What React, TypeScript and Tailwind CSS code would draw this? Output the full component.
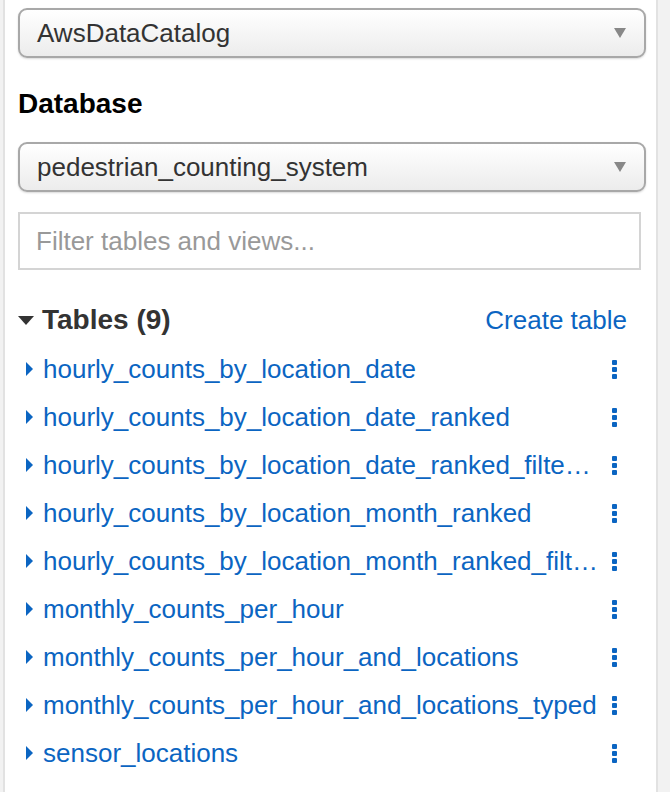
import React from "react";

const tables = [
  "hourly_counts_by_location_date",
  "hourly_counts_by_location_date_ranked",
  "hourly_counts_by_location_date_ranked_filtered",
  "hourly_counts_by_location_month_ranked",
  "hourly_counts_by_location_month_ranked_filtered",
  "monthly_counts_per_hour",
  "monthly_counts_per_hour_and_locations",
  "monthly_counts_per_hour_and_locations_typed",
  "sensor_locations",
];

function Select({ value }: { value: string }) {
  return (
    <div className="flex h-[50px] items-center justify-between rounded-[9px] border-2 border-[#a8a8a8] bg-gradient-to-b from-[#ffffff] to-[#ececec] pl-[17px] pr-[18px] shadow-[0_1px_2px_rgba(0,0,0,0.15)]">
      <span className="text-[26px] leading-none text-[#333]">{value}</span>
      <svg width="12" height="10" viewBox="0 0 12 10">
        <path d="M0 0 L12 0 L6 10 Z" fill="#888" />
      </svg>
    </div>
  );
}

function Dots() {
  return (
    <div className="flex flex-col items-center gap-[2px]">
      <span className="h-[5px] w-[5px] rounded-[1px] bg-[#0b65c2]" />
      <span className="h-[5px] w-[5px] rounded-[1px] bg-[#0b65c2]" />
      <span className="h-[5px] w-[5px] rounded-[1px] bg-[#0b65c2]" />
    </div>
  );
}

export default function App() {
  return (
    <div
      className="flex h-[792px] w-[670px] bg-[#f2f2f2]"
      style={{ fontFamily: '"Liberation Sans", Arial, sans-serif' }}
    >
      <div className="ml-[3px] h-full w-[655px] border-x-2 border-[#e2e2e2] bg-white pl-[13px] pr-[10px] pt-[8px]">
        <Select value="AwsDataCatalog" />
        <div className="mt-[32px] text-[28px] font-bold leading-none text-black">Database</div>
        <div className="mt-[24px]">
          <Select value="pedestrian_counting_system" />
        </div>
        <div className="mr-[5px] mt-[20px] flex h-[58px] items-center border-2 border-[#d4d4d4] pl-[16px] text-[26px] text-[#999]">
          Filter tables and views...
        </div>
        <div className="mt-[36px] flex items-center justify-between pr-[19px]">
          <div className="flex items-center gap-[8px]">
            <svg width="16" height="9" viewBox="0 0 16 9">
              <path d="M0 0 L16 0 L8 9 Z" fill="#333" />
            </svg>
            <span className="text-[28px] font-bold leading-none text-[#333]">Tables (9)</span>
          </div>
          <span className="text-[26px] leading-none text-[#0b65c2]">Create table</span>
        </div>
        <div className="mt-[11px] flex flex-col">
          {tables.map((t) => (
            <div key={t} className="flex h-[48px] items-center pl-[8px] pr-[29px]">
              <svg width="7" height="14" viewBox="0 0 7 14" className="mr-[10px] shrink-0">
                <path d="M0 0 L7 7 L0 14 Z" fill="#0b65c2" />
              </svg>
              <span className="min-w-0 flex-1 truncate text-[26px] leading-[32px] text-[#0b65c2]">{t}</span>
              <div className="ml-[13px] shrink-0">
                <Dots />
              </div>
            </div>
          ))}
        </div>
      </div>
    </div>
  );
}
